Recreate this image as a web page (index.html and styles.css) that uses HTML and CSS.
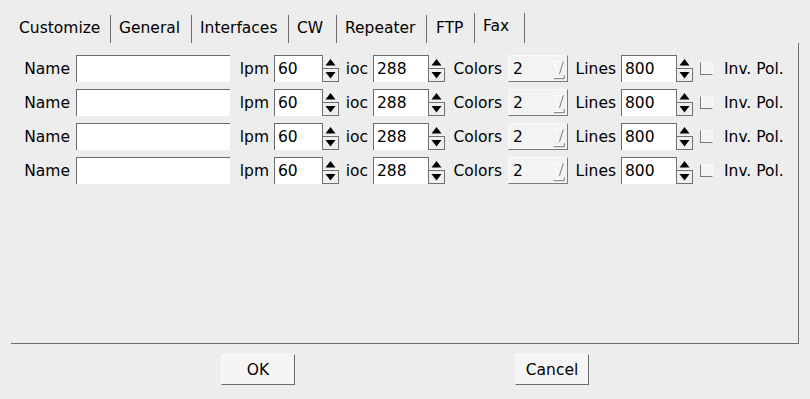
FILE: index.html
```html
<!DOCTYPE html>
<html>
<head>
<meta charset="utf-8">
<link rel="stylesheet" href="styles.css">
</head>
<body>
<div class="dialog">
  <div class="tabs">
    <div class="tab t1">Customize</div>
    <div class="tab t2">General</div>
    <div class="tab t3">Interfaces</div>
    <div class="tab t4">CW</div>
    <div class="tab t5">Repeater</div>
    <div class="tab t6">FTP</div>
    <div class="tab t7 active">Fax</div>
  </div>
  <div class="panel">
    <div class="row">
      <label class="lbl w-name">Name</label><div class="input w-text"></div>
      <label class="lbl w-lpm">lpm</label><div class="input w-lpmv">60</div><svg class="spin" viewBox="0 0 17 27"><rect x="0" y="0" width="17" height="27" class="sbg"/><path d="M0.5 0V27M0 13.5H17M0 26.5H17M16.5 14V27" class="sl"/><path d="M3.5 10.5h10l-5-6.5z" class="ar"/><path d="M3.5 17h10l-5 6.5z" class="ar"/></svg>
      <label class="lbl w-ioc">ioc</label><div class="input w-iocv">288</div><svg class="spin" viewBox="0 0 17 27"><rect x="0" y="0" width="17" height="27" class="sbg"/><path d="M0.5 0V27M0 13.5H17M0 26.5H17M16.5 14V27" class="sl"/><path d="M3.5 10.5h10l-5-6.5z" class="ar"/><path d="M3.5 17h10l-5 6.5z" class="ar"/></svg>
      <label class="lbl w-col">Colors</label><div class="choice">2<svg class="tri" viewBox="0 0 14 27"><path d="M1.5 5.5h10" class="tl"/><path d="M11.5 5.5l-4 13" class="td"/><path d="M1.5 5.5l4 11" class="tl"/><path d="M1.5 22.5h10" class="tl"/><path d="M1.5 23.5h11V20" class="td"/></svg></div>
      <label class="lbl w-lines">Lines</label><div class="input w-linesv">800</div><svg class="spin" viewBox="0 0 17 27"><rect x="0" y="0" width="17" height="27" class="sbg"/><path d="M0.5 0V27M0 13.5H17M0 26.5H17M16.5 14V27" class="sl"/><path d="M3.5 10.5h10l-5-6.5z" class="ar"/><path d="M3.5 17h10l-5 6.5z" class="ar"/></svg>
      <span class="check"></span><label class="lbl-r">Inv. Pol.</label>
    </div>
    <div class="row">
      <label class="lbl w-name">Name</label><div class="input w-text"></div>
      <label class="lbl w-lpm">lpm</label><div class="input w-lpmv">60</div><svg class="spin" viewBox="0 0 17 27"><rect x="0" y="0" width="17" height="27" class="sbg"/><path d="M0.5 0V27M0 13.5H17M0 26.5H17M16.5 14V27" class="sl"/><path d="M3.5 10.5h10l-5-6.5z" class="ar"/><path d="M3.5 17h10l-5 6.5z" class="ar"/></svg>
      <label class="lbl w-ioc">ioc</label><div class="input w-iocv">288</div><svg class="spin" viewBox="0 0 17 27"><rect x="0" y="0" width="17" height="27" class="sbg"/><path d="M0.5 0V27M0 13.5H17M0 26.5H17M16.5 14V27" class="sl"/><path d="M3.5 10.5h10l-5-6.5z" class="ar"/><path d="M3.5 17h10l-5 6.5z" class="ar"/></svg>
      <label class="lbl w-col">Colors</label><div class="choice">2<svg class="tri" viewBox="0 0 14 27"><path d="M1.5 5.5h10" class="tl"/><path d="M11.5 5.5l-4 13" class="td"/><path d="M1.5 5.5l4 11" class="tl"/><path d="M1.5 22.5h10" class="tl"/><path d="M1.5 23.5h11V20" class="td"/></svg></div>
      <label class="lbl w-lines">Lines</label><div class="input w-linesv">800</div><svg class="spin" viewBox="0 0 17 27"><rect x="0" y="0" width="17" height="27" class="sbg"/><path d="M0.5 0V27M0 13.5H17M0 26.5H17M16.5 14V27" class="sl"/><path d="M3.5 10.5h10l-5-6.5z" class="ar"/><path d="M3.5 17h10l-5 6.5z" class="ar"/></svg>
      <span class="check"></span><label class="lbl-r">Inv. Pol.</label>
    </div>
    <div class="row">
      <label class="lbl w-name">Name</label><div class="input w-text"></div>
      <label class="lbl w-lpm">lpm</label><div class="input w-lpmv">60</div><svg class="spin" viewBox="0 0 17 27"><rect x="0" y="0" width="17" height="27" class="sbg"/><path d="M0.5 0V27M0 13.5H17M0 26.5H17M16.5 14V27" class="sl"/><path d="M3.5 10.5h10l-5-6.5z" class="ar"/><path d="M3.5 17h10l-5 6.5z" class="ar"/></svg>
      <label class="lbl w-ioc">ioc</label><div class="input w-iocv">288</div><svg class="spin" viewBox="0 0 17 27"><rect x="0" y="0" width="17" height="27" class="sbg"/><path d="M0.5 0V27M0 13.5H17M0 26.5H17M16.5 14V27" class="sl"/><path d="M3.5 10.5h10l-5-6.5z" class="ar"/><path d="M3.5 17h10l-5 6.5z" class="ar"/></svg>
      <label class="lbl w-col">Colors</label><div class="choice">2<svg class="tri" viewBox="0 0 14 27"><path d="M1.5 5.5h10" class="tl"/><path d="M11.5 5.5l-4 13" class="td"/><path d="M1.5 5.5l4 11" class="tl"/><path d="M1.5 22.5h10" class="tl"/><path d="M1.5 23.5h11V20" class="td"/></svg></div>
      <label class="lbl w-lines">Lines</label><div class="input w-linesv">800</div><svg class="spin" viewBox="0 0 17 27"><rect x="0" y="0" width="17" height="27" class="sbg"/><path d="M0.5 0V27M0 13.5H17M0 26.5H17M16.5 14V27" class="sl"/><path d="M3.5 10.5h10l-5-6.5z" class="ar"/><path d="M3.5 17h10l-5 6.5z" class="ar"/></svg>
      <span class="check"></span><label class="lbl-r">Inv. Pol.</label>
    </div>
    <div class="row">
      <label class="lbl w-name">Name</label><div class="input w-text"></div>
      <label class="lbl w-lpm">lpm</label><div class="input w-lpmv">60</div><svg class="spin" viewBox="0 0 17 27"><rect x="0" y="0" width="17" height="27" class="sbg"/><path d="M0.5 0V27M0 13.5H17M0 26.5H17M16.5 14V27" class="sl"/><path d="M3.5 10.5h10l-5-6.5z" class="ar"/><path d="M3.5 17h10l-5 6.5z" class="ar"/></svg>
      <label class="lbl w-ioc">ioc</label><div class="input w-iocv">288</div><svg class="spin" viewBox="0 0 17 27"><rect x="0" y="0" width="17" height="27" class="sbg"/><path d="M0.5 0V27M0 13.5H17M0 26.5H17M16.5 14V27" class="sl"/><path d="M3.5 10.5h10l-5-6.5z" class="ar"/><path d="M3.5 17h10l-5 6.5z" class="ar"/></svg>
      <label class="lbl w-col">Colors</label><div class="choice">2<svg class="tri" viewBox="0 0 14 27"><path d="M1.5 5.5h10" class="tl"/><path d="M11.5 5.5l-4 13" class="td"/><path d="M1.5 5.5l4 11" class="tl"/><path d="M1.5 22.5h10" class="tl"/><path d="M1.5 23.5h11V20" class="td"/></svg></div>
      <label class="lbl w-lines">Lines</label><div class="input w-linesv">800</div><svg class="spin" viewBox="0 0 17 27"><rect x="0" y="0" width="17" height="27" class="sbg"/><path d="M0.5 0V27M0 13.5H17M0 26.5H17M16.5 14V27" class="sl"/><path d="M3.5 10.5h10l-5-6.5z" class="ar"/><path d="M3.5 17h10l-5 6.5z" class="ar"/></svg>
      <span class="check"></span><label class="lbl-r">Inv. Pol.</label>
    </div>
  </div>
  <div class="buttons">
    <button class="btn">OK</button>
    <button class="btn">Cancel</button>
  </div>
</div>
</body>
</html>
```

FILE: styles.css
```css
html, body {
  margin: 0;
  padding: 0;
  background: #ededed;
}
body {
  font-family: "DejaVu Sans", sans-serif;
  font-size: 15.5px;
  color: #000;
  width: 810px;
  height: 399px;
  overflow: hidden;
}
.dialog {
  padding-top: 15px;
}
.tabs {
  display: flex;
  height: 28px;
  padding-left: 10px;
  align-items: stretch;
}
.tab {
  box-sizing: border-box;
  padding-left: 8px;
  line-height: 25px;
  padding-top: 1px;
  border-right: 1px solid #6e6e6e;
  white-space: nowrap;
}
.t1 { width: 101px; padding-left: 9px; }
.t2 { width: 81px; }
.t3 { width: 97px; }
.t4 { width: 48px; }
.t5 { width: 90px; }
.t6 { width: 48px; padding-left: 9px; }
.t7 { width: 51px; }
.tab.active {
  border-left: 1px solid #6e6e6e;
  margin-left: -1px;
  margin-top: -2px;
  padding-top: 0;
  line-height: 26px;
  height: 30px;
}
.panel {
  margin: 0 11px;
  border-right: 1px solid #6e6e6e;
  border-bottom: 1px solid #6e6e6e;
  padding-top: 12px;
  box-sizing: border-box;
  height: 301px;
  display: flex;
  flex-direction: column;
  gap: 7px;
}
.row {
  display: flex;
  height: 27px;
  align-items: stretch;
}
.lbl {
  display: flex;
  align-items: center;
  justify-content: flex-end;
  padding-right: 6px;
  box-sizing: border-box;
}
.w-name { width: 65px; }
.w-lpm { width: 44px; padding-right: 5px; }
.w-ioc { width: 34px; padding-right: 5px; }
.w-col { width: 63px; }
.w-lines { width: 53px; padding-right: 5px; }
.input {
  background: #fff;
  border-top: 1px solid #6a6a6a;
  border-left: 1px solid #6a6a6a;
  box-sizing: border-box;
  padding-left: 3px;
  display: flex;
  align-items: center;
}
.w-text { width: 154px; }
.w-lpmv { width: 48px; }
.w-iocv { width: 55px; }
.w-linesv { width: 55px; }
.spin {
  width: 17px;
  height: 27px;
}
.sbg { fill: #efefef; }
.sl {
  stroke: #707070;
  stroke-width: 1;
  fill: none;
}
.ar { fill: #000; }
.choice {
  width: 60px;
  background: #f3f3f3;
  border-right: 1px solid #7a7a7a;
  border-bottom: 1px solid #7a7a7a;
  border-top: 1px solid #f8f8f8;
  border-left: 1px solid #f8f8f8;
  box-sizing: border-box;
  display: flex;
  align-items: center;
  justify-content: space-between;
  padding-left: 4px;
}
.tri {
  width: 14px;
  height: 26px;
  margin-right: 1px;
}
.tl { stroke: #ffffff; stroke-width: 1; fill: none; }
.td { stroke: #777; stroke-width: 1; fill: none; }
.check {
  align-self: center;
  width: 13px;
  height: 13px;
  box-sizing: border-box;
  margin-left: 7px;
  background: #f4f4f4;
  border-top: 1px solid #f9f9f9;
  border-left: 1px solid #7a7a7a;
  border-right: 1px solid #f9f9f9;
  border-bottom: 1px solid #7a7a7a;
}
.lbl-r {
  display: flex;
  align-items: center;
  padding-left: 11px;
}
.buttons {
  display: flex;
  padding-left: 221px;
  gap: 220px;
  margin-top: 10px;
}
.btn {
  width: 74px;
  height: 31px;
  font-family: "DejaVu Sans", sans-serif;
  font-size: 15.5px;
  color: #000;
  background: #f5f5f5;
  border: none;
  border-right: 1px solid #6a6a6a;
  border-bottom: 1px solid #6a6a6a;
  border-top: 1px solid #fafafa;
  border-left: 1px solid #fafafa;
  padding: 0;
  margin: 0;
}
```
